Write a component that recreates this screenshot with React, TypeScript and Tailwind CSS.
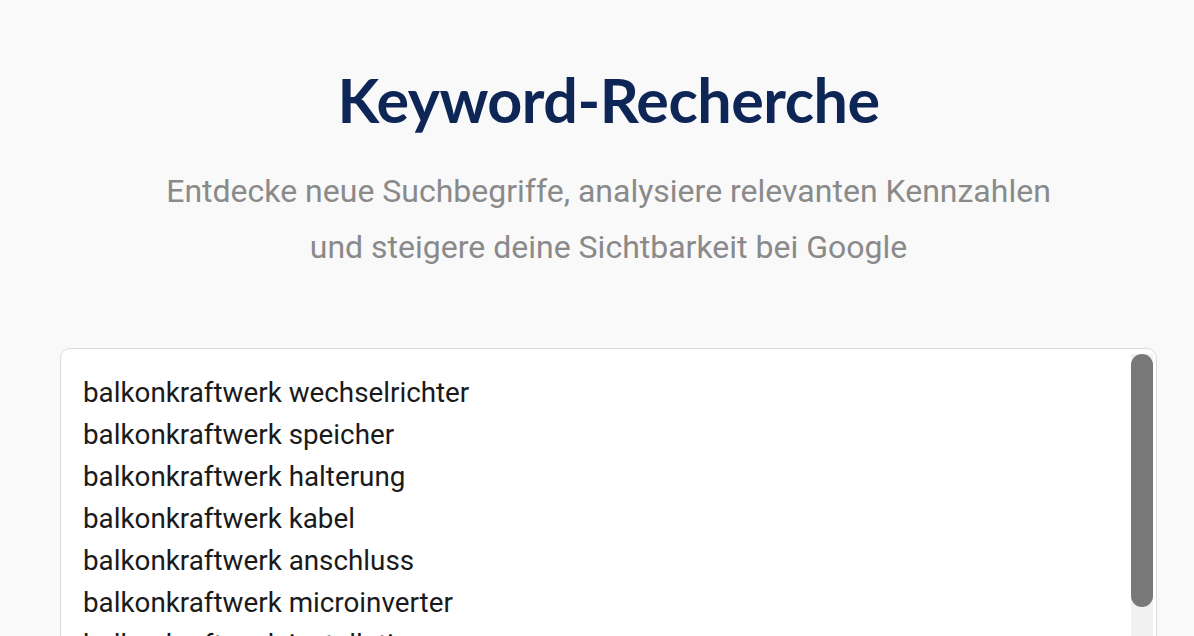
const keywords = [
  "balkonkraftwerk wechselrichter",
  "balkonkraftwerk speicher",
  "balkonkraftwerk halterung",
  "balkonkraftwerk kabel",
  "balkonkraftwerk anschluss",
  "balkonkraftwerk microinverter",
  "balkonkraftwerk installation",
  "balkonkraftwerk genehmigung",
];

export default function App() {
  return (
    <div className="min-h-screen h-[636px] overflow-hidden bg-[#f9f9f9] pl-[60px] pr-[37px]">
      <div className="flex flex-col items-center pt-[64px]">
        <h1 className="font-['Lato',sans-serif] text-[61px] font-bold leading-[72px] tracking-[-0.5px] text-[#0e2656]">
          Keyword-Recherche
        </h1>
        <p className="mt-[27px] text-center font-['Roboto',sans-serif] text-[32px] leading-[56px] text-[#8a8a8a]">
          Entdecke neue Suchbegriffe, analysiere relevanten Kennzahlen
          <br />
          und steigere deine Sichtbarkeit bei Google
        </p>
      </div>

      <div className="mt-[73px] flex h-[420px] rounded-[10px] border border-[#dcdcdc] bg-white">
        <div className="flex-1 overflow-hidden px-[22px] pt-[23px] font-['Roboto',sans-serif] text-[27.8px] leading-[42px] text-[#1a1a1a]">
          {keywords.map((k) => (
            <div key={k}>{k}</div>
          ))}
        </div>
        <div className="mr-[3px] mt-[5px] w-[22px] bg-[#f1f1f1]">
          <div className="h-[253px] w-full rounded-[11px] bg-[#787878]" />
        </div>
      </div>
    </div>
  );
}
